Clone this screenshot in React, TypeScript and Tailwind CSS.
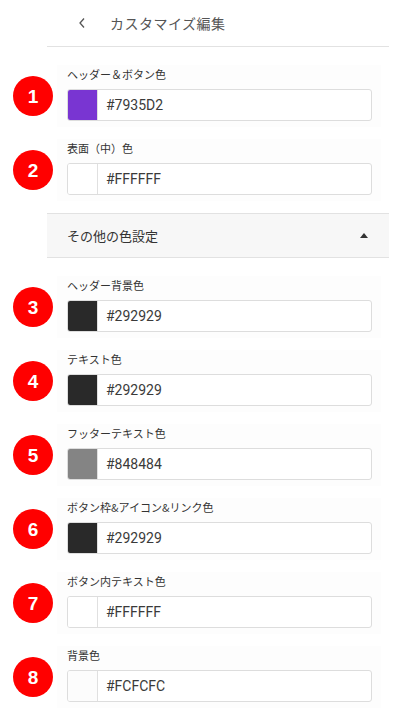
import React from 'react';

const jp = { fontFamily: '"Noto Sans CJK JP", "Noto Sans", sans-serif' };

type Item = { n: number; label: string; hex: string };

const topItems: Item[] = [
  { n: 1, label: 'ヘッダー＆ボタン色', hex: '#7935D2' },
  { n: 2, label: '表面（中）色', hex: '#FFFFFF' },
];

const moreItems: Item[] = [
  { n: 3, label: 'ヘッダー背景色', hex: '#292929' },
  { n: 4, label: 'テキスト色', hex: '#292929' },
  { n: 5, label: 'フッターテキスト色', hex: '#848484' },
  { n: 6, label: 'ボタン枠&アイコン&リンク色', hex: '#292929' },
  { n: 7, label: 'ボタン内テキスト色', hex: '#FFFFFF' },
  { n: 8, label: '背景色', hex: '#FCFCFC' },
];

function ColorRow({ item }: { item: Item }) {
  return (
    <div className="flex items-center pl-[13px] mb-[12px]">
      <div className="w-[40px] h-[40px] rounded-full bg-[#ff0000] flex items-center justify-center shrink-0">
        <span className="text-white font-bold text-[19px] leading-none font-['Liberation_Sans',sans-serif]">
          {item.n}
        </span>
      </div>
      <div className="ml-[4px] w-[324px] h-[62px] bg-[#fdfdfd] pl-[10px] pr-[9px] pt-[1px]">
        <div className="h-[16px] text-[11px] leading-[16px] text-[#333]" style={jp}>
          {item.label}
        </div>
        <div className="mt-[7px] h-[32px] flex border border-[#dddddd] rounded-[3px] bg-white">
          <div
            className="w-[30px] h-full rounded-l-[2px] border-r border-[#e0e0e0]"
            style={{ backgroundColor: item.hex }}
          />
          <div className="flex items-center pl-[8px] text-[14px] text-[#3a3a3a] font-['Roboto',sans-serif]">
            {item.hex}
          </div>
        </div>
      </div>
    </div>
  );
}

export default function App() {
  return (
    <div className="w-[406px] min-h-[724px] bg-white">
      <div className="ml-[47px] w-[342px] h-[47px] border-b border-[#e2e2e2] flex items-center">
        <svg width="8" height="12" viewBox="0 0 8 12" className="ml-[31px]">
          <path d="M6 1.5 L2 6 L6 10.5" fill="none" stroke="#555" strokeWidth="1.3" />
        </svg>
        <span className="ml-[24px] text-[14px] text-[#555] tracking-[0.5px]" style={jp}>
          カスタマイズ編集
        </span>
      </div>

      <div className="mt-[18px]">
        {topItems.map((it) => (
          <ColorRow key={it.n} item={it} />
        ))}
      </div>

      <div className="ml-[47px] w-[342px] h-[45px] mt-[1px] bg-[#f7f7f7] border-y border-[#e2e2e2] flex items-center justify-between pl-[20px] pr-[21px]">
        <span className="text-[13px] text-[#333]" style={jp}>
          その他の色設定
        </span>
        <svg width="8" height="5" viewBox="0 0 8 5">
          <path d="M0 5 L4 0 L8 5 Z" fill="#333" />
        </svg>
      </div>

      <div className="mt-[18px]">
        {moreItems.map((it) => (
          <ColorRow key={it.n} item={it} />
        ))}
      </div>
    </div>
  );
}
